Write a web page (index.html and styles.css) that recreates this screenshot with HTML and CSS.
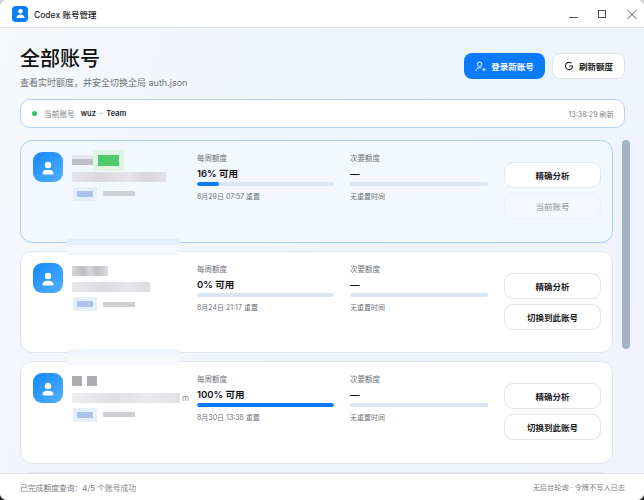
FILE: index.html

```html
<!DOCTYPE html>
<html lang="zh-CN">
<head>
    <meta charset="UTF-8">
    <meta name="viewport" content="width=device-width, initial-scale=1.0">
    <title>Codex 账号管理</title>
    <link rel="stylesheet" href="styles.css">
</head>
<body>
    <div class="app">
        <header class="titlebar">
            <div class="app-logo">
                <svg width="11" height="11" viewBox="0 0 11 11"><circle cx="5.500" cy="3.200" r="2.200" fill="#fff"/><path d="M1.500 10c0-2.400 1.700-3.600 4-3.600s4 1.200 4 3.600z" fill="#fff"/></svg>
            </div>
            <span class="app-name">Codex 账号管理</span>
            <div class="win-controls">
                <svg width="12" height="12" viewBox="0 0 12 12"><path d="M3 9.500h10" stroke="#555" fill="none"/></svg>
                <svg width="12" height="12" viewBox="0 0 12 12"><rect x="2.500" y="2.500" width="7" height="7" stroke="#555" fill="none"/></svg>
                <svg width="12" height="12" viewBox="0 0 12 12"><path d="M1.500 2l9 9M10.500 2l-9 9" stroke="#555" fill="none"/></svg>
            </div>
        </header>

        <main class="content">
            <section class="page-head">
                <div>
                    <h1>全部账号</h1>
                    <p class="subtitle">查看实时额度，并安全切换全局 auth.json</p>
                </div>
                <div class="head-actions">
                    <button class="btn btn-primary">
                        <svg width="11" height="11" viewBox="0 0 12 12" fill="none" stroke="#fff"><circle cx="5" cy="3.500" r="2.400"/><path d="M1 11c0-2.500 1.600-3.700 4-3.700 .8 0 1.400 .1 2 .4M8 9.500h3.500M9.750 7.700v3.500"/></svg>
                        登录新账号
                    </button>
                    <button class="btn btn-plain">
                        <svg width="10" height="10" viewBox="0 0 11 11" fill="none" stroke="#222" stroke-width="1.200"><path d="M9.500 5.500a4 4 0 1 1-1.300-3M5.800 5.500h3.700"/></svg>
                        刷新额度
                    </button>
                </div>
            </section>

            <section class="status-bar">
                <span class="dot"></span>
                <span class="status-label">当前账号</span>
                <span class="status-user">wuz<i>·</i>Team</span>
                <span class="status-time">13:38:29 刷新</span>
            </section>

            <div class="list-wrap">
                <div class="account-list">
                    <article class="card card-active">
                        <div class="account">
                            <div class="avatar"><svg width="16" height="16" viewBox="0 0 16 16"><circle cx="8" cy="6" r="3.200" fill="#fff"/><path d="M2.500 14.200c0-2.300 2.300-3.400 5.500-3.400s5.500 1.100 5.500 3.400c0 .8-.5 1.300-1.300 1.300H3.800c-.8 0-1.300-.5-1.300-1.300z" fill="#fff"/></svg></div>
                            <div class="identity">
                                <div class="name-row"><span class="mosaic m-name1"></span><span class="mosaic m-green"></span></div>
                                <div class="mail-row"><span class="mosaic m-mail1"></span></div>
                                <div class="tag-row"><span class="mosaic m-tag"></span><span class="mosaic m-plan"></span></div>
                            </div>
                        </div>
                        <div class="quota">
                            <div class="q-label">每周额度</div>
                            <div class="q-value">16% 可用</div>
                            <div class="track"><div class="fill" style="width: 16%"></div></div>
                            <div class="q-note">8月29日 07:57 重置</div>
                        </div>
                        <div class="quota">
                            <div class="q-label">次要额度</div>
                            <div class="q-value">—</div>
                            <div class="track"></div>
                            <div class="q-note">无重置时间</div>
                        </div>
                        <div class="card-actions">
                            <button class="btn-card">精确分析</button>
                            <button class="btn-card btn-off">当前账号</button>
                        </div>
                        <div class="smudge"></div>
                    </article>

                    <article class="card">
                        <div class="account">
                            <div class="avatar"><svg width="16" height="16" viewBox="0 0 16 16"><circle cx="8" cy="6" r="3.200" fill="#fff"/><path d="M2.500 14.200c0-2.300 2.300-3.400 5.500-3.400s5.500 1.100 5.500 3.400c0 .8-.5 1.300-1.300 1.300H3.800c-.8 0-1.300-.5-1.300-1.300z" fill="#fff"/></svg></div>
                            <div class="identity">
                                <div class="name-row"><span class="mosaic m-name2"></span></div>
                                <div class="mail-row"><span class="mosaic m-mail2"></span></div>
                                <div class="tag-row"><span class="mosaic m-tag"></span><span class="mosaic m-plan"></span></div>
                            </div>
                        </div>
                        <div class="quota">
                            <div class="q-label">每周额度</div>
                            <div class="q-value">0% 可用</div>
                            <div class="track"></div>
                            <div class="q-note">8月24日 21:17 重置</div>
                        </div>
                        <div class="quota">
                            <div class="q-label">次要额度</div>
                            <div class="q-value">—</div>
                            <div class="track"></div>
                            <div class="q-note">无重置时间</div>
                        </div>
                        <div class="card-actions">
                            <button class="btn-card">精确分析</button>
                            <button class="btn-card">切换到此账号</button>
                        </div>
                        <div class="smudge smudge-light"></div>
                    </article>

                    <article class="card">
                        <div class="account">
                            <div class="avatar"><svg width="16" height="16" viewBox="0 0 16 16"><circle cx="8" cy="6" r="3.200" fill="#fff"/><path d="M2.500 14.200c0-2.300 2.300-3.400 5.500-3.400s5.500 1.100 5.500 3.400c0 .8-.5 1.300-1.300 1.300H3.800c-.8 0-1.300-.5-1.300-1.300z" fill="#fff"/></svg></div>
                            <div class="identity">
                                <div class="name-row"><span class="mosaic m-name3"></span><span class="mosaic m-name3"></span></div>
                                <div class="mail-row"><span class="mosaic m-mail3"></span><span class="mail-tail">m</span></div>
                                <div class="tag-row"><span class="mosaic m-tag"></span><span class="mosaic m-plan"></span></div>
                            </div>
                        </div>
                        <div class="quota">
                            <div class="q-label">每周额度</div>
                            <div class="q-value">100% 可用</div>
                            <div class="track"><div class="fill" style="width: 100%"></div></div>
                            <div class="q-note">8月30日 13:38 重置</div>
                        </div>
                        <div class="quota">
                            <div class="q-label">次要额度</div>
                            <div class="q-value">—</div>
                            <div class="track"></div>
                            <div class="q-note">无重置时间</div>
                        </div>
                        <div class="card-actions">
                            <button class="btn-card">精确分析</button>
                            <button class="btn-card">切换到此账号</button>
                        </div>
                    </article>

                    <article class="card"></article>
                </div>
                <div class="scrollbar"></div>
            </div>
        </main>

        <footer class="statusline">
            <span>已完成额度查询：4/5 个账号成功</span>
            <span class="statusline-note">无后台轮询 · 令牌不写入日志</span>
        </footer>
    </div>
</body>
</html>
```

FILE: styles.css

```css
* {
    box-sizing: border-box;
}

body {
    width: 644px;
    height: 500px;
    margin: 0;
    overflow: hidden;
    background: linear-gradient(#d0d0d0 0 50%, #222 50%);
    font-family: Inter, "Noto Sans CJK SC", sans-serif;
    color: #1b1b1f;
}

.app {
    display: flex;
    flex-direction: column;
    width: 644px;
    height: 500px;
    border-radius: 7px;
    overflow: hidden;
    background: #fff;
}

.titlebar {
    display: flex;
    align-items: center;
    flex: none;
    height: 28px;
    padding: 0 6px 0 12px;
    border-bottom: 1px solid #dfe1e4;
    background: #fff;
}

.app-logo {
    display: flex;
    align-items: center;
    justify-content: center;
    width: 16px;
    height: 16px;
    border-radius: 4px;
    background: #0a7cff;
}

.app-name {
    margin-left: 6px;
    font-size: 8.500px;
    font-weight: 500;
}

.win-controls {
    display: flex;
    gap: 18px;
    margin-left: auto;
}

.content {
    flex: 1;
    min-height: 0;
    padding: 20px 0 0 20px;
    overflow: hidden;
    background: linear-gradient(110deg, #f6f8fb 0%, #edf4fe 60%, #f1f3fe 100%);
}

.page-head {
    display: flex;
    justify-content: space-between;
    align-items: flex-start;
    padding-right: 19px;
}

h1 {
    margin: 0;
    font-size: 20px;
    line-height: 23px;
    font-weight: 500;
    color: #111;
}

.subtitle {
    margin: 5px 0 0;
    font-size: 9px;
    line-height: 13px;
    color: #6f7278;
}

.head-actions {
    display: flex;
    gap: 7px;
    margin-top: 5px;
}

.btn {
    display: flex;
    align-items: center;
    justify-content: center;
    gap: 5px;
    height: 26px;
    border-radius: 8px;
    font-family: inherit;
    font-size: 8.500px;
    font-weight: 600;
}

.btn-primary {
    width: 81px;
    border: 0;
    background: #0a7aff;
    color: #fff;
}

.btn-plain {
    width: 73px;
    border: 1px solid #e0e4ea;
    background: #fff;
    color: #222;
}

.status-bar {
    display: flex;
    align-items: center;
    width: 605px;
    height: 29px;
    margin-top: 10px;
    padding: 0 10px 0 11px;
    border: 1px solid #b4d3fb;
    border-radius: 10px;
    background: #fff;
    font-size: 7.500px;
}

.dot {
    width: 5px;
    height: 5px;
    border-radius: 50%;
    background: #34c759;
}

.status-label {
    margin-left: 7px;
    font-size: 7.700px;
    color: #7b7e84;
}

.status-user {
    margin-left: 6px;
    font-weight: 600;
}

.status-user i {
    margin: 0 4px;
    font-style: normal;
    color: #777;
}

.status-time {
    margin-left: auto;
    font-size: 7.200px;
    color: #84878d;
}

.list-wrap {
    display: flex;
    align-items: flex-start;
    gap: 9px;
    margin-top: 12px;
}

.account-list {
    display: flex;
    flex-direction: column;
    gap: 8px;
    width: 593px;
}

.card {
    position: relative;
    display: grid;
    grid-template-columns: 148px 137px 138px 97px;
    column-gap: 16px;
    flex: none;
    height: 102.500px;
    padding: 11px 12px 0;
    border: 1px solid #e1e5ec;
    border-radius: 12px;
    background: #fff;
}

.card-active {
    border-color: #a9cdf8;
    background: #f3f8ff;
}

.account {
    display: flex;
    gap: 9px;
}

.avatar {
    display: flex;
    align-items: center;
    justify-content: center;
    flex: none;
    width: 30px;
    height: 30px;
    border-radius: 9px;
    background: linear-gradient(135deg, #1586ff, #4fb2fd);
}

.identity {
    display: flex;
    flex-direction: column;
    flex: none;
    padding-top: 3px;
}

.name-row {
    display: flex;
    align-items: center;
    gap: 5px;
    height: 10px;
}

.mail-row {
    display: flex;
    align-items: center;
    height: 11px;
    margin-top: 6px;
}

.mail-tail {
    margin-left: 2px;
    font-size: 8px;
    color: #8a8d93;
}

.tag-row {
    display: flex;
    align-items: center;
    gap: 10px;
    height: 11px;
    margin-top: 6px;
}

.mosaic {
    display: block;
    flex: none;
    filter: blur(0.500px);
    background: #cfd0d4;
}

.m-name1 {
    width: 21px;
    height: 10px;
    background: linear-gradient(#e6e7ea 0 45%, #bfc0c5 45%);
}

.m-name2 {
    width: 36px;
    height: 10px;
    background: linear-gradient(90deg, #d6d6da, #bdbdc1 30%, #d8d8dc 50%, #c0c0c4 70%, #dcdce0);
}

.m-name3 {
    width: 10px;
    height: 10px;
    background: #adaeb2;
}

.m-green {
    width: 21px;
    height: 11px;
    background: #4fcb6e;
    box-shadow: 0 0 0 5px #dff5e6;
}

.m-mail1 {
    width: 94px;
    height: 10px;
    background: linear-gradient(90deg, #e4e4e8, #dadade 30%, #e4e4e8 60%, #d8d8dc 80%, #e2e2e6);
}

.m-mail2 {
    width: 78px;
    height: 10px;
    background: linear-gradient(90deg, #e8e8ec, #dcdce0 40%, #e6e6ea 70%, #dedee2);
}

.m-mail3 {
    width: 108px;
    height: 10px;
    background: linear-gradient(90deg, #ededf0, #e0e0e4 40%, #eaeaee 70%, #e2e2e6);
}

.m-tag {
    width: 16px;
    height: 6px;
    margin-left: 5px;
    background: #a9c3ea;
    box-shadow: 0 0 0 4px #e6f0fc;
}

.m-plan {
    width: 32px;
    height: 5px;
    background: #cfd0d4;
}

.quota {
    padding-top: 2px;
}

.q-label {
    font-size: 7.500px;
    line-height: 10px;
    color: #6f7278;
}

.q-value {
    margin-top: 3px;
    font-size: 9.500px;
    line-height: 14px;
    font-weight: 600;
    color: #111;
}

.track {
    height: 4px;
    margin-top: 1px;
    border-radius: 2px;
    background: #dbe6f4;
    overflow: hidden;
}

.fill {
    height: 100%;
    border-radius: 2px;
    background: #0a7aff;
}

.q-note {
    margin-top: 5px;
    font-size: 7px;
    line-height: 11px;
    color: #6f7278;
}

.card-actions {
    display: flex;
    flex-direction: column;
    gap: 5px;
    padding-top: 10px;
}

.btn-card {
    height: 26px;
    border: 1px solid #e1e5ec;
    border-radius: 9px;
    background: #fff;
    font-family: inherit;
    font-size: 8.500px;
    font-weight: 600;
    color: #1b1b1f;
}

.btn-off {
    border-color: #edf1f6;
    background: #f5f8fd;
    color: #a3a6ab;
    font-weight: 500;
}

.smudge {
    position: absolute;
    z-index: 1;
    left: 46px;
    bottom: -13px;
    width: 113px;
    height: 16px;
    background: linear-gradient(#e4effd 0 40%, #f4f7fc 40%);
}

.smudge-light {
    background: linear-gradient(#f0f5fd 0 40%, #f6f8fc 40%);
}

.scrollbar {
    flex: none;
    width: 8px;
    height: 209px;
    border-radius: 4px;
    background: #a3b3c3;
}

.statusline {
    display: flex;
    align-items: center;
    justify-content: space-between;
    flex: none;
    height: 27px;
    padding: 0 19px 0 20px;
    border-top: 1px solid #dfe1e4;
    background: #fff;
    font-size: 7.800px;
    color: #7b7e84;
}

.statusline-note {
    font-size: 7.200px;
}
```
